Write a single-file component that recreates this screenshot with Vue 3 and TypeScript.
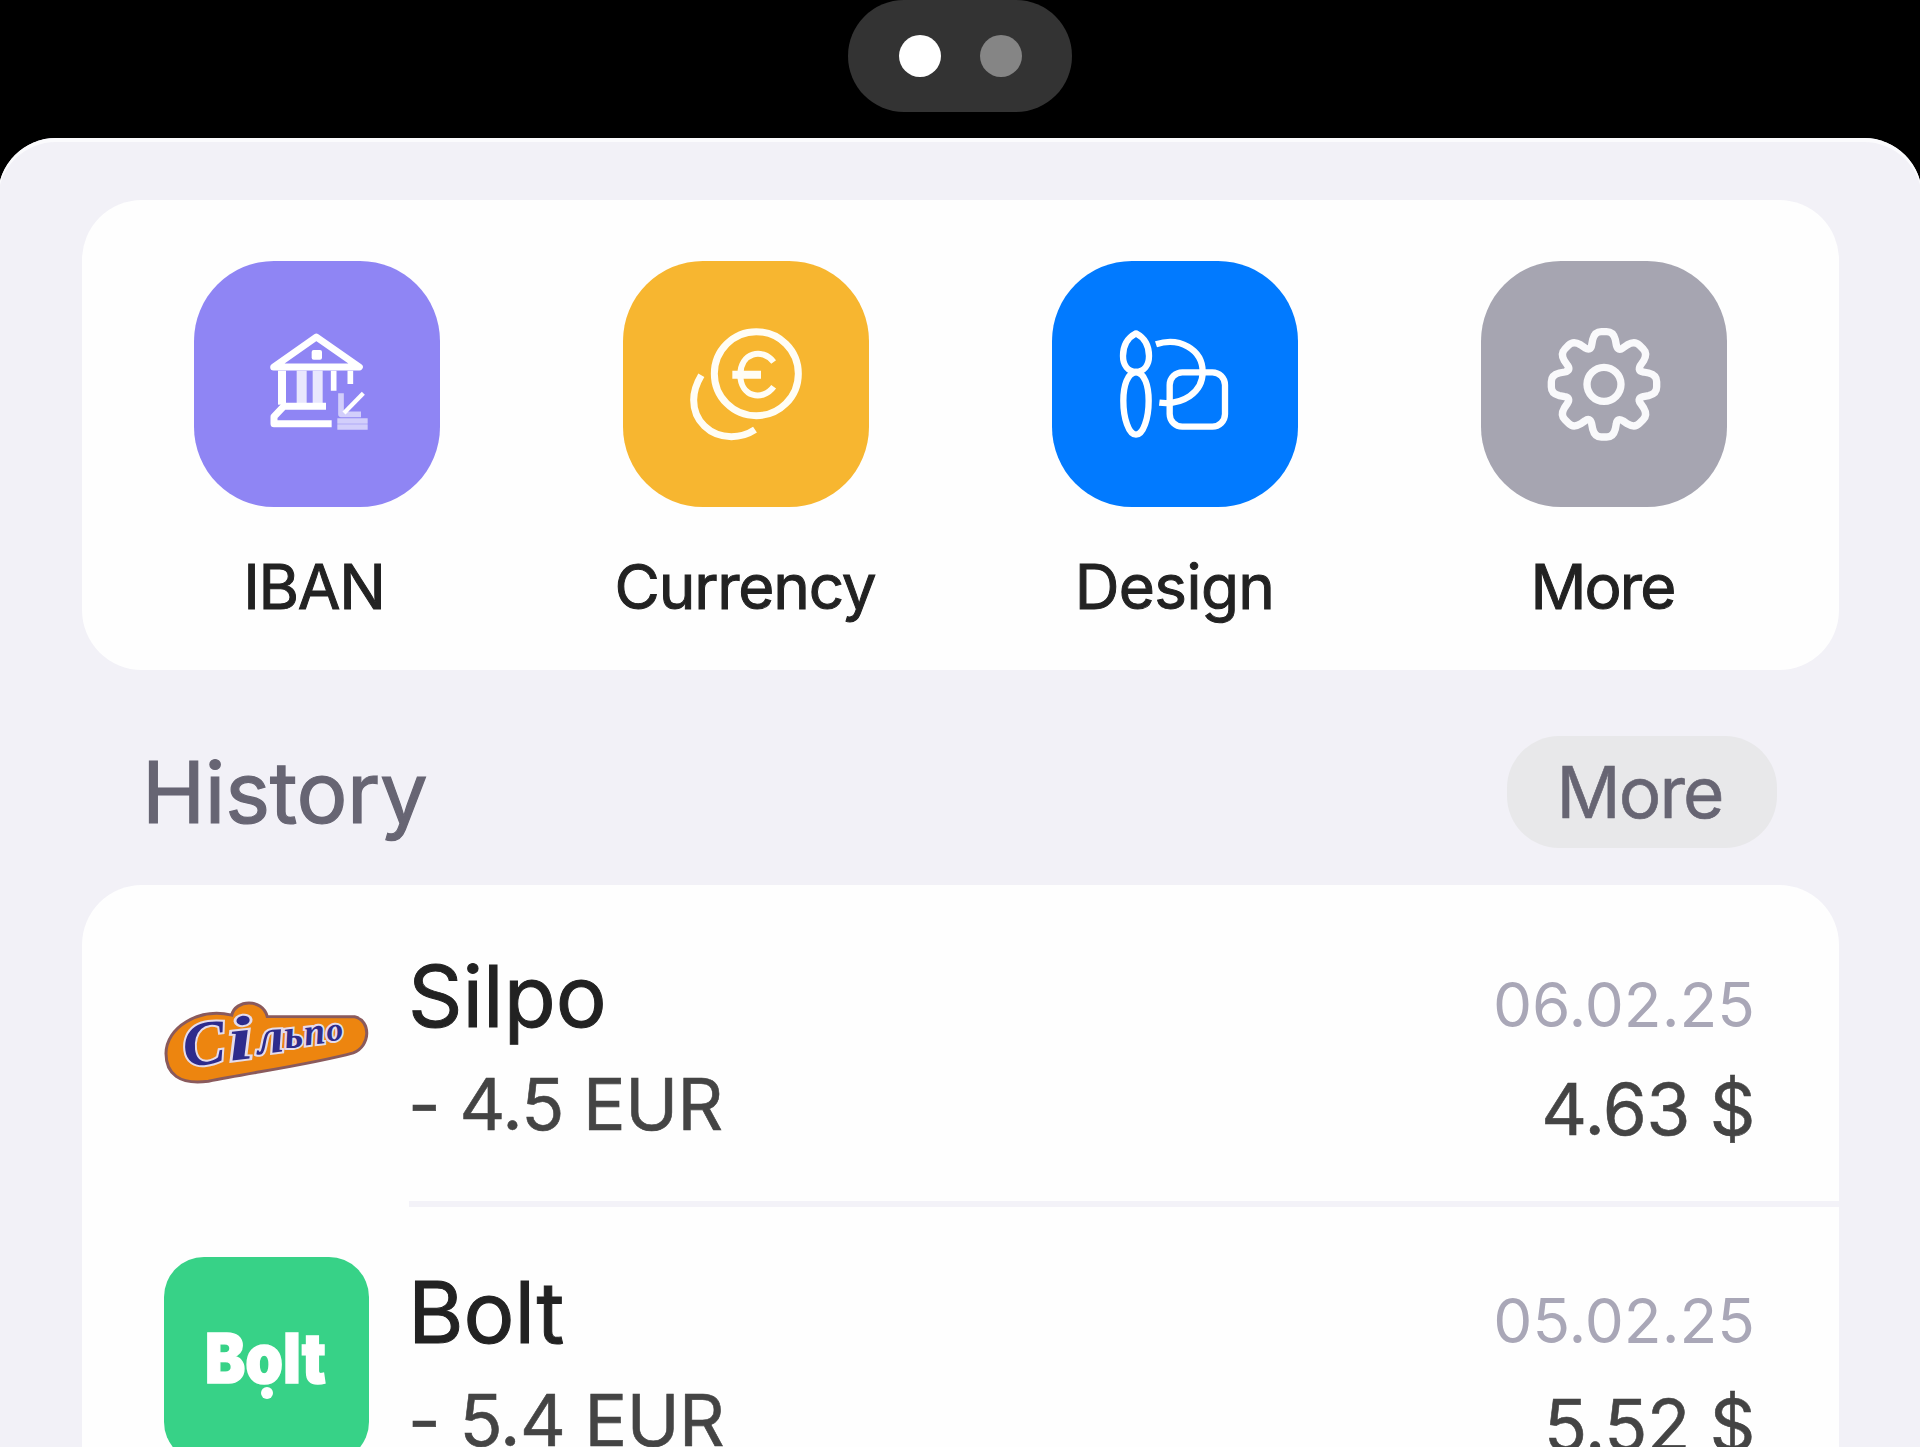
<script setup lang="ts">
interface Action { id: string; label: string }
interface Entry { id: string; title: string; amount: string; date: string; total: string }

const actions: Action[] = [
  { id: 'iban', label: 'IBAN' },
  { id: 'currency', label: 'Currency' },
  { id: 'design', label: 'Design' },
  { id: 'more', label: 'More' },
]

const entries: Entry[] = [
  { id: 'silpo', title: 'Silpo', amount: '- 4.5 EUR', date: '06.02.25', total: '4.63 $' },
  { id: 'bolt', title: 'Bolt', amount: '- 5.4 EUR', date: '05.02.25', total: '5.52 $' },
]

// Builds the outline of a gear with eight rounded teeth around the origin.
function gearPath(): string {
  const at = (t: number, r: number, k: number): string => {
    const a = (k * Math.PI) / 4
    const x = t * Math.cos(a) + r * Math.sin(a)
    const y = t * Math.sin(a) - r * Math.cos(a)
    return `${x.toFixed(1)} ${y.toFixed(1)}`
  }
  let d = `M${at(-37, 118, 0)}`
  for (let k = 0; k < 8; k++) {
    d += `L${at(-34, 134, k)}Q${at(-28, 158, k)} ${at(-8, 158, k)}L${at(8, 158, k)}`
    d += `Q${at(28, 158, k)} ${at(34, 134, k)}L${at(37, 118, k)}`
    d += `Q${at(42, 98, k)} ${at(-37, 118, k + 1)}`
  }
  return d + 'Z'
}
const gear = gearPath()
</script>

<template>
  <main class="screen">
    <header class="pager">
      <div class="pager-pill">
        <i class="dot active"></i>
        <i class="dot"></i>
      </div>
    </header>

    <section class="sheet">
      <nav class="card actions">
        <a v-for="a in actions" :key="a.id" class="action">
          <span class="tile" :class="a.id">
            <svg v-if="a.id === 'iban'" viewBox="44 61 738 738">
              <g fill="none" stroke="#fff" stroke-width="21" stroke-linejoin="round">
                <path d="M283 379 411 289 540 379Z" />
                <path d="M440 497H313L284 528V549H457" />
                <path d="M308 390V492" stroke-width="24" />
                <path d="M367 390V492" stroke-width="30" opacity=".8" />
                <path d="M415 390V492" stroke-width="30" opacity=".8" />
                <path d="M463 390V450M513 390V430" stroke-width="17" />
                <path d="M552 458 494 517" stroke-width="13" />
                <path d="M485 458V521H545" stroke-width="17" opacity=".6" />
                <path d="M474 541H565M474 559H565" stroke-width="16" opacity=".6" />
              </g>
              <rect x="397" y="328" width="31" height="29" rx="6" fill="#fff" />
            </svg>
            <svg v-else-if="a.id === 'currency'" viewBox="70 61 738 738">
              <g fill="none" stroke="#fffdf5" stroke-width="21">
                <circle cx="470" cy="399" r="126" />
                <path d="M305 404C292 426 282 450 282 478C282 540 330 588 395 588C420 588 445 581 466 567" />
                <path d="M522 364C488 320 422 336 422 402S488 484 522 438" stroke-width="18" />
                <path d="M398 396H484M398 408H484" stroke-width="12" />
              </g>
            </svg>
            <svg v-else-if="a.id === 'design'" viewBox="38 61 738 738">
              <g fill="none" stroke="#fff" stroke-width="19" stroke-linejoin="round">
                <path d="M290 278C264 292 251 316 251 346C251 374 266 392 290 394C314 392 329 374 329 346C329 316 316 292 290 278Z" />
                <path d="M290 394C264 397 252 435 252 480C252 532 268 582 290 582S328 532 328 480C328 435 316 397 290 394Z" />
                <path d="M350 311C420 288 490 326 490 394C490 456 430 494 360 486" />
                <rect x="391" y="395" width="166" height="163" rx="38" />
              </g>
            </svg>
            <svg v-else viewBox="62 61 738 738">
              <g transform="translate(431 431)" fill="none" stroke="#f9f9fb" stroke-width="22" stroke-linejoin="round">
                <path :d="gear" />
                <circle r="51" />
              </g>
            </svg>
          </span>
          <span class="label" :class="'label-' + a.id">{{ a.label }}</span>
        </a>
      </nav>

      <div class="heading">
        <h2>History</h2>
        <button type="button" class="more-button">More</button>
      </div>

      <div class="card history">
        <article v-for="e in entries" :key="e.id" class="row">
          <svg v-if="e.id === 'silpo'" class="logo" viewBox="27 -150 614 614">
            <path d="M33 190C33 112 130 52 230 75C240 28 322 24 336 79L598 80C648 92 646 168 594 188C470 222 300 245 160 273C72 285 33 250 33 190Z" fill="#ed850f" stroke="#8a5a5c" stroke-width="9" />
            <g font-family="'Liberation Serif', serif" font-weight="700" font-style="italic" fill="#2d2b8c" stroke="#e4dcec" stroke-width="12" paint-order="stroke" transform="rotate(-7 100 225)">
              <text x="90" y="229" font-size="190">С</text>
              <text x="226" y="227" font-size="186" textLength="74" lengthAdjust="spacingAndGlyphs">і</text>
              <text x="312" y="219" font-size="146" textLength="82" lengthAdjust="spacingAndGlyphs">л</text>
              <text x="395" y="211" font-size="122">ь</text>
              <text x="455" y="209" font-size="114">п</text>
              <text x="522" y="205" font-size="100">о</text>
            </g>
          </svg>
          <svg v-else class="logo bolt" viewBox="0 0 205 205">
            <text x="41" y="126" font-family="Inter, sans-serif" font-weight="900" font-size="69" fill="#fff" stroke="#fff" stroke-width="1.5" textLength="121" lengthAdjust="spacingAndGlyphs">Bolt</text>
            <circle cx="103" cy="136" r="6" fill="#fff" />
          </svg>
          <div class="body">
            <div class="left">
              <span class="title">{{ e.title }}</span>
              <span class="amount">{{ e.amount }}</span>
            </div>
            <div class="right">
              <time class="date">{{ e.date }}</time>
              <span class="amount">{{ e.total }}</span>
            </div>
          </div>
        </article>
      </div>
    </section>
  </main>
</template>

<style>
body { margin: 0; background: #000; }
</style>

<style scoped>
.screen {
  display: flex;
  flex-direction: column;
  width: 1920px;
  height: 1447px;
  overflow: hidden;
  background: #000;
  font-family: Inter, sans-serif;
  font-weight: 400;
}
.pager { height: 138px; flex: none; display: flex; justify-content: center; align-items: flex-start; }
.pager-pill {
  display: flex;
  align-items: center;
  justify-content: center;
  gap: 39px;
  width: 224px;
  height: 112px;
  border-radius: 56px;
  background: #333;
}
.dot { width: 42px; height: 42px; border-radius: 50%; background: #858585; }
.dot.active { background: #fff; }
.sheet {
  flex: 1;
  min-height: 0;
  box-sizing: border-box;
  margin: 0 -2px;
  padding: 62px 83px 0 84px;
  border-radius: 58px 58px 0 0;
  background: #f2f1f7;
  box-shadow: inset 0 4px 0 #fbfbfd;
}
.card { background: #fefefe; border-radius: 60px; }
.actions {
  box-sizing: border-box;
  height: 470px;
  padding: 60.5px 20.5px 0;
  display: grid;
  grid-template-columns: repeat(4, 1fr);
}
.action { display: flex; flex-direction: column; align-items: center; }
.tile { width: 246px; height: 246px; border-radius: 80px; }
.tile svg { display: block; width: 100%; height: 100%; }
.iban { background: #8f85f4; }
.currency { background: #f7b630; }
.design { background: #017aff; }
.more { background: #a6a5b1; }
.label {
  margin-top: 40.5px;
  font-size: 62px;
  line-height: 80px;
  color: #222;
  -webkit-text-stroke: 1px currentColor;
}
.label-iban { letter-spacing: -1.3px; margin-right: 6px; }
.label-currency { letter-spacing: -1.2px; margin-right: 2px; }
.label-design { letter-spacing: -0.6px; margin-right: 1px; }
.label-more { letter-spacing: -1.9px; margin-right: 3px; }
.heading {
  box-sizing: border-box;
  height: 215px;
  padding: 66px 62px 0 60px;
  display: flex;
  justify-content: space-between;
  align-items: flex-start;
}
h2 {
  margin: 0;
  font-size: 85px;
  line-height: 113px;
  font-weight: 400;
  letter-spacing: -0.3px;
  color: #676573;
  -webkit-text-stroke: 1.2px currentColor;
}
.more-button {
  width: 270px;
  height: 112px;
  padding: 0 5px 0 0;
  border: 0;
  border-radius: 52px;
  background: #e8e8ea;
  font: 400 71px/113px Inter, sans-serif;
  letter-spacing: -1.9px;
  color: #676573;
  -webkit-text-stroke: 0.6px currentColor;
}
.history { padding-top: 5px; height: 700px; box-sizing: border-box; }
.row { display: flex; height: 316.5px; padding-left: 82px; }
.logo { flex: none; width: 205px; height: 205px; margin: 50px 40px 0 0; }
.bolt { border-radius: 40px; background: #37d287; }
.body { flex: 1; display: flex; justify-content: space-between; border-bottom: 6px solid #f3f2f8; }
.left, .right { display: flex; flex-direction: column; }
.right { align-items: flex-end; padding-right: 84px; }
.title {
  margin: 56.5px 0 0 -1px;
  font-size: 85px;
  line-height: 100px;
  color: #222;
  -webkit-text-stroke: 1px currentColor;
}
.date { margin-top: 64.5px; font-size: 62px; line-height: 100px; color: #a9a7b7; }
.amount {
  margin: 12px 0 0 -1px;
  font-size: 71px;
  line-height: 90px;
  letter-spacing: -0.6px;
  color: #444;
  white-space: pre;
  -webkit-text-stroke: 0.6px currentColor;
}
.right .amount { margin-top: 9px; letter-spacing: -0.3px; }
</style>
